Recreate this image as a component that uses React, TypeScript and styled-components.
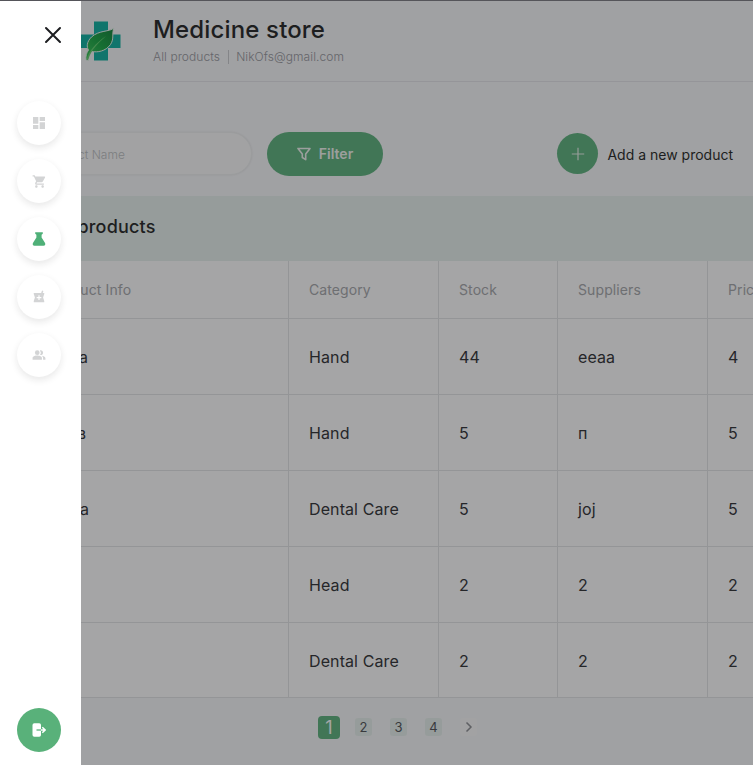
import React from "react";
import styled, { createGlobalStyle } from "styled-components";
import { MdDashboard, MdShoppingCart, MdLocalPharmacy, MdPeopleAlt } from "react-icons/md";

const GlobalStyle = createGlobalStyle`
  *, *::before, *::after { box-sizing: border-box; }
  html, body { margin: 0; height: 100%; overflow: hidden; }
  body { font-family: Inter, "Liberation Sans", sans-serif; color: #1d1e21; background: #f7f8fa; }
  button { font: inherit; border: 0; padding: 0; cursor: pointer; }
`;

const Page = styled.div`
  width: 100%;
  height: 765px;
  overflow: hidden;
  border-top: 1px solid #55555a;
`;

const Header = styled.header`
  display: flex;
  gap: 32px;
  height: 81px;
  padding: 19px 0 0 81px;
  border-bottom: 1px solid #e4e5e9;
`;

const Logo = styled.svg`
  width: 40px;
  height: 42px;
  flex: none;
`;

const Title = styled.h1`
  margin: -5px 0 5px;
  font-size: 24px;
  line-height: 30px;
  font-weight: 500;
  letter-spacing: 0.15px;
`;

const Meta = styled.div`
  display: flex;
  align-items: center;
  font-size: 12px;
  line-height: 14px;
  font-weight: 300;
  letter-spacing: 0.08px;
  color: #93959a;

  span + span {
    margin-left: 8px;
    padding-left: 7px;
    border-left: 1px solid #c9cacd;
  }
`;

const Toolbar = styled.div`
  display: flex;
  align-items: center;
  height: 114px;
  padding: 49px 20px 0 20px;
`;

const Search = styled.input`
  width: 232px;
  height: 43px;
  margin: 0 15px 20px 0;
  padding: 1px 18px 0 24px;
  border: 1px solid #eff1f1;
  border-radius: 60px;
  background: #fafbfb;
  box-shadow: 0 0 2px rgba(29, 30, 33, 0.1);
  font: 300 12px Inter, sans-serif;

  &::placeholder { color: #bbbdbf; opacity: 1; }
`;

const FilterButton = styled.button`
  display: flex;
  align-items: center;
  justify-content: center;
  gap: 8px;
  width: 116px;
  height: 44px;
  margin-bottom: 20px;
  border-radius: 60px;
  background: #59b17a;
  color: #f0f5f1;
  font-size: 14px;
  font-weight: 600;
`;

const AddButton = styled.button`
  display: flex;
  align-items: center;
  gap: 9px;
  margin: 0 0 20px auto;
  background: none;
  color: inherit;
  font-size: 14px;
  white-space: nowrap;
`;

const AddLabel = styled.span`
  padding-top: 2px;
`;

const PlusCircle = styled.span`
  display: grid;
  place-items: center;
  width: 41px;
  height: 41px;
  border-radius: 50%;
  background: #59b17a;
`;

const TableTitle = styled.h2`
  height: 65px;
  margin: 0;
  padding-left: 50px;
  background: #e7f1ed;
  font-size: 18px;
  line-height: 62px;
  font-weight: 500;
  letter-spacing: 0.2px;
`;

const Table = styled.div`
  width: 858px;
  background: #fff;
`;

const Row = styled.div<{ $head?: boolean }>`
  display: grid;
  grid-template-columns: 289px 150px 119px 150px 150px;
  height: ${(p) => (p.$head ? 58 : 76)}px;
  border-bottom: 1px solid #e3e4e6;
  font-size: ${(p) => (p.$head ? 14 : 16)}px;
  letter-spacing: 0.1px;
  color: ${(p) => (p.$head ? "#a3a5a8" : "#2b2c30")};

  &:last-child { height: 75px; }
`;

const Cell = styled.div<{ $indent?: number; $head?: boolean }>`
  display: flex;
  align-items: center;
  padding: ${(p) => (p.$head ? "0 0 1px" : "1px 0 0")} ${(p) => p.$indent ?? 20}px;
  padding-right: 0;
  white-space: nowrap;
  border-right: 1px solid #e3e4e6;
`;

const Pagination = styled.nav`
  display: flex;
  align-items: center;
  height: 58px;
  padding-left: 318px;
`;

const PageButton = styled.button<{ $active?: boolean; $plain?: boolean }>`
  display: grid;
  place-items: center;
  width: ${(p) => (p.$active ? 22 : 17)}px;
  height: ${(p) => (p.$active ? 23 : 18)}px;
  margin-right: ${(p) => (p.$active ? 15 : 18)}px;
  border-radius: ${(p) => (p.$active ? 4 : 3)}px;
  background: ${(p) => (p.$active ? "#59b17a" : p.$plain ? "#fafafa" : "#e7f1ed")};
  color: ${(p) => (p.$active ? "#fff" : "#4b4d52")};
  font-size: ${(p) => (p.$active ? 18 : 13)}px;
`;

const Overlay = styled.div`
  position: fixed;
  inset: 1px 0 0 0;
  background: rgba(29, 30, 33, 0.4);
`;

const Sidebar = styled.aside`
  display: flex;
  flex-direction: column;
  align-items: flex-start;
  width: 81px;
  height: 100%;
  padding: 25px 0 13px 17px;
  background: #fff;
`;

const CloseButton = styled.button`
  width: 18px;
  height: 18px;
  margin: 0 0 57px 27px;
  background: none;

  svg { display: block; }
`;

const NavList = styled.nav`
  display: grid;
  gap: 14px;
`;

const NavButton = styled.button<{ $active?: boolean }>`
  display: grid;
  place-items: center;
  width: 44px;
  height: 44px;
  border-radius: 50%;
  background: #fff;
  color: ${(p) => (p.$active ? "#4fb078" : "#d3d4d5")};
  box-shadow: 0 3px 7px rgba(29, 30, 33, 0.1);
`;

const LogoutButton = styled(NavButton)`
  margin-top: auto;
  background: #59b17a;
  box-shadow: none;
`;

const Flask = () => (
  <svg width="16" height="16" viewBox="0 0 16 16" fill="currentColor">
    <path d="M4.2 1.3h7.6v1.4l-1.2 1v2.7l3.3 5.4c.9 1.5.3 2.9-1.3 2.9H3.4c-1.6 0-2.2-1.4-1.3-2.9l3.3-5.4V3.7l-1.2-1z" />
  </svg>
);

const navItems = [
  { name: "Dashboard", icon: <MdDashboard size={16} /> },
  { name: "Orders", icon: <MdShoppingCart size={15} /> },
  { name: "Products", icon: <Flask />, active: true },
  { name: "Suppliers", icon: <MdLocalPharmacy size={14} /> },
  { name: "Customers", icon: <MdPeopleAlt size={14} /> },
];

const products = [
  { name: "a", indent: 79, values: ["Hand", "44", "eeaa", "4"] },
  { name: "в", indent: 77, values: ["Hand", "5", "п", "5"] },
  { name: "a", indent: 80, values: ["Dental Care", "5", "joj", "5"] },
  { name: "", indent: 50, values: ["Head", "2", "2", "2"] },
  { name: "", indent: 50, values: ["Dental Care", "2", "2", "2"] },
];

export default function App() {
  return (
    <>
      <GlobalStyle />
      <Page>
        <Header>
          <Logo viewBox="0 0 40 42">
            <defs>
              <linearGradient id="leaf" x1="0" y1="1" x2="1" y2="0">
                <stop offset="0" stopColor="#35c653" />
                <stop offset="0.5" stopColor="#12a53e" />
                <stop offset="1" stopColor="#0b7d35" />
              </linearGradient>
            </defs>
            <path d="M13 1.500h14v13h12.500v13.500H27v12.500H13V28H0V14.500h13z" fill="#08b09e" />
            <path
              d="M33 8c-4.500 4-15 2-22.500 9-5 5-5 10-3 13-2 3-3 6-2.500 10l2.500.5c0-3 1-6 3-9 6 1 14 0 19-7 4-6 1-11 3.500-16.500z"
              fill="url(#leaf)"
              stroke="#e9f5ee"
              strokeWidth="1"
            />
            <path d="M5.500 40c2-9 9-16.500 19.500-24C16.500 24 10.500 29 7 40z" fill="#5fd06c" />
          </Logo>
          <div>
            <Title>Medicine store</Title>
            <Meta>
              <span>All products</span>
              <span>NikOfs@gmail.com</span>
            </Meta>
          </div>
        </Header>
        <Toolbar>
          <Search placeholder="Product Name" />
          <FilterButton>
            <svg width="14" height="14" viewBox="0 0 14 14" fill="none" stroke="currentColor" strokeWidth="1.6" strokeLinejoin="round">
              <path d="M1 1.500h12L8.700 7v5.700L5.300 10.500V7z" />
            </svg>
            Filter
          </FilterButton>
          <AddButton>
            <PlusCircle>
              <svg width="14" height="14" viewBox="0 0 14 14" stroke="#e4f0e8" strokeWidth="1.200">
                <path d="M7 .8v12.400M.8 7h12.400" />
              </svg>
            </PlusCircle>
            <AddLabel>Add a new product</AddLabel>
          </AddButton>
        </Toolbar>
        <TableTitle>All products</TableTitle>
        <Table>
          <Row $head>
            <Cell $head $indent={49}>Product Info</Cell>
            <Cell $head>Category</Cell>
            <Cell $head>Stock</Cell>
            <Cell $head>Suppliers</Cell>
            <Cell $head>Price</Cell>
          </Row>
          {products.map((p, i) => (
            <Row key={i}>
              <Cell $indent={p.indent}>{p.name}</Cell>
              {p.values.map((v, j) => (
                <Cell key={j}>{v}</Cell>
              ))}
            </Row>
          ))}
        </Table>
        <Pagination>
          <PageButton $active>1</PageButton>
          <PageButton>2</PageButton>
          <PageButton>3</PageButton>
          <PageButton>4</PageButton>
          <PageButton $plain aria-label="Next">
            <svg width="8" height="12" viewBox="0 0 8 12" fill="none" stroke="#8b8d91" strokeWidth="1.500">
              <path d="M1.500 1.500L6 6l-4.500 4.500" />
            </svg>
          </PageButton>
        </Pagination>
      </Page>
      <Overlay>
        <Sidebar>
          <CloseButton aria-label="Close">
            <svg width="18" height="18" viewBox="0 0 18 18" stroke="#1d1e21" strokeWidth="2" strokeLinecap="round">
              <path d="M2 2l14 14M16 2L2 16" />
            </svg>
          </CloseButton>
          <NavList>
            {navItems.map((item) => (
              <NavButton key={item.name} aria-label={item.name} $active={item.active}>
                {item.icon}
              </NavButton>
            ))}
          </NavList>
          <LogoutButton aria-label="Log out">
            <svg width="14" height="14" viewBox="0 0 14 14">
              <rect x="0.500" y="0.300" width="8.500" height="13.400" rx="1.800" fill="#fff" />
              <path d="M4.500 7H9" stroke="#59b17a" strokeWidth="1.300" />
              <path d="M9 7h4M10.300 4.200L13.100 7l-2.800 2.800" fill="none" stroke="#fff" strokeWidth="1.500" />
            </svg>
          </LogoutButton>
        </Sidebar>
      </Overlay>
    </>
  );
}
